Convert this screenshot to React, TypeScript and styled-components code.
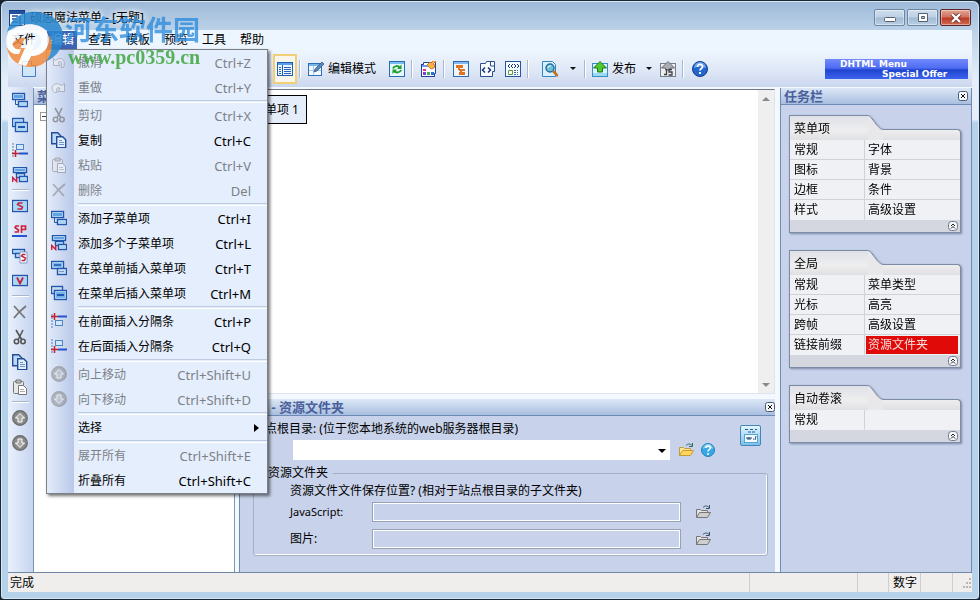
import React from "react";
import styled, { createGlobalStyle, css } from "styled-components";

const GlobalStyle = createGlobalStyle`
  *, *::before, *::after { box-sizing: border-box; }
  html, body { margin: 0; background: #16242e; }
  body, button, input, select, table {
    font-family: "Noto Sans", "Noto Sans CJK SC", sans-serif;
    font-size: 12px;
    line-height: 16px;
    color: #000;
  }
  button { border: 0; padding: 0; margin: 0; background: none; cursor: default; }
  a { color: inherit; text-decoration: none; }
`;

/* ---------- window frame ---------- */

const Window = styled.div`
  position: relative;
  min-height: 100vh;
  display: flex;
  flex-direction: column;
  padding: 0 7px 7px;
  border: 1px solid #1b2a38;
  border-radius: 7px 7px 4px 4px;
  background: linear-gradient(#9db9d8 0, #bcd2e9 30px, #e6eff9 80px, #e6eff9 118px, #b6d1ea 122px, #b6d1ea 100%);
  box-shadow: inset 0 0 0 1px #d5e6f5;
  overflow: hidden;
`;

const TitleBar = styled.header`
  display: flex;
  align-items: center;
  gap: 5px;
  height: 29px;
  padding: 4px 1px 0;
`;

const Title = styled.h1`
  flex: 1;
  margin: 0;
  font-size: 12px;
  font-weight: 400;
  text-shadow: 0 0 6px #fff, 0 0 6px #fff;
`;

const WindowButtons = styled.div`
  display: flex;
  gap: 2px;
`;

const WindowButton = styled.button<{ $close?: boolean }>`
  display: grid;
  place-items: center;
  width: 31px;
  height: 17px;
  border: 1px solid ${p => (p.$close ? "#5c2427" : "#6d87a3")};
  border-radius: 2px;
  background: ${p =>
    p.$close
      ? "linear-gradient(#e2a595, #d0705c 48%, #b93a22 52%, #d06a50)"
      : "linear-gradient(#cfdeee, #bdd0e4 48%, #a2bad2 52%, #b9cfe5)"};
  box-shadow: inset 0 0 0 1px rgba(255, 255, 255, 0.4);
`;

const Client = styled.div`
  flex: 1;
  display: flex;
  flex-direction: column;
  background: #eef5fd;
`;

/* ---------- menu bar ---------- */

const MenuBar = styled.nav`
  display: flex;
  gap: 8px;
  height: 20px;
  padding-left: 1px;
  background: #edf5fe;
`;

const MenuSlot = styled.div`
  position: relative;
`;

const MenuButton = styled.button<{ $open?: boolean }>`
  height: 18px;
  padding: 1px 3px;
  margin-top: 1px;
  white-space: nowrap;
  ${p => p.$open && css`background: #3d64b4; color: #fff;`}
`;

const Dropdown = styled.div`
  position: absolute;
  z-index: 5;
  top: 19px;
  left: -1px;
  width: 222px;
  border: 1px solid #7b8088;
  background: linear-gradient(90deg, #e4ecfb 0, #b9c8e8 27px, #e5eefc 27px, #e5eefc 100%);
  box-shadow: 2px 2px 3px rgba(0, 0, 0, 0.55);
`;

const MenuItem = styled.button`
  display: flex;
  align-items: center;
  width: 100%;
  height: 25px;
  padding-right: 16px;
  text-align: left;
  white-space: nowrap;
  &:disabled { color: #7c8188; }
  &:disabled svg { filter: grayscale(1); opacity: 0.5; }
`;

const MenuIcon = styled.span`
  width: 31px;
  height: 18px;
  padding-left: 4px;
`;

const MenuLabel = styled.span`
  flex: 1;
`;

const MenuKeys = styled.span`
  font-size: 13px;
`;

const MenuRule = styled.hr`
  height: 3px;
  margin: 0 0 0 31px;
  border: 0;
  border-top: 1px solid #bccbe0;
  border-bottom: 1px solid #fff;
`;

/* ---------- toolbar ---------- */

const ToolBar = styled.div`
  display: flex;
  align-items: center;
  gap: 2px;
  height: 37px;
  padding-left: 9px;
  background: linear-gradient(#eef5fe, #dfe8f7 55%, #cbd7ee);
`;

const FileTools = styled.div`
  width: 254px;
`;

const Tool = styled.button<{ $active?: boolean }>`
  display: grid;
  place-items: center;
  width: 24px;
  height: 30px;
  ${p => p.$active && css`border: 2px solid #f0cf77; background: #f7f5ec;`}
`;

const TextTool = styled.button<{ $split?: boolean }>`
  display: flex;
  align-items: center;
  gap: 4px;
  height: 30px;
  padding: 0 ${p => (p.$split ? 0 : 7)}px 0 ${p => (p.$split ? 2 : 3)}px;
  white-space: nowrap;
`;

const SearchTool = styled(TextTool)`
  gap: 6px;
  padding: 0 4px 0 9px;
`;

const ToolRule = styled.span`
  width: 4px;
  height: 18px;
  border-left: 1px solid #aab8cf;
  box-shadow: inset 1px 0 #fff;
`;

const Caret = styled.span`
  margin: 0 2px 0 6px;
  border: 3px solid transparent;
  border-top-color: #111;
  border-bottom: 0;
`;

const Banner = styled.a`
  display: flex;
  flex-direction: column;
  width: 143px;
  height: 20px;
  margin: 0 4px 0 auto;
  background: linear-gradient(#7389fb, #4e6df4 45%, #1f45ce 55%, #3c62f0);
  color: #fff;
  font: bold 9px/10px "DejaVu Sans", sans-serif;
  white-space: nowrap;
  span:first-child { padding-left: 15px; }
  span:last-child { padding-left: 57px; }
`;

/* ---------- work area ---------- */

const WorkArea = styled.div`
  flex: 1;
  display: flex;
  background: #f3f9fe;
  border-bottom: 1px solid #7088a4;
`;

const SideBar = styled.div`
  display: flex;
  flex-direction: column;
  width: 25px;
  background: linear-gradient(90deg, #e9f1fd, #c6d4ee);
`;

const SideTool = styled.button`
  display: grid;
  place-items: center;
  width: 23px;
  height: 25px;
`;

const SideRule = styled.hr`
  width: 17px;
  height: 2px;
  margin: 2px 4px;
  border: 0;
  border-top: 1px solid #a9b6cc;
  background: #fff;
`;

const Pane = styled.section`
  display: flex;
  flex-direction: column;
  min-width: 0;
`;

const TreePane = styled(Pane)`
  width: 202px;
  margin: 1px 4px 0 0;
  border: 1px solid #7b95b5;
  border-width: 0 1px 0 1px;
  background: #fff;
`;

const PaneHeader = styled.header`
  display: flex;
  align-items: center;
  justify-content: space-between;
  height: 17px;
  padding: 0 3px;
  border-bottom: 1px solid #6d8bb5;
  background: linear-gradient(#dce7f6, #a9bfe0);
  color: #4a5f9b;
  overflow: hidden;
`;

const DockHeader = styled(PaneHeader)`
  padding: 0 0 0 2px;
`;

const PaneTitle = styled.h2`
  margin: 0;
  font-size: 13px;
  line-height: 16px;
  font-weight: 700;
  white-space: nowrap;
`;

const TreeBody = styled.div`
  padding: 7px 6px;
`;

const Expander = styled.button`
  display: grid;
  place-items: center;
  width: 9px;
  height: 9px;
  border: 1px solid #9a9a9a;
  &::after { content: ""; width: 5px; height: 1px; background: #444; }
`;

const Center = styled.div`
  flex: 1;
  display: flex;
  flex-direction: column;
  gap: 5px;
  min-width: 0;
  margin: 2px 5px 0 0;
`;

const Preview = styled.div`
  flex: 1;
  display: flex;
  justify-content: space-between;
  border: 1px solid #717784;
  border-bottom-color: #dce4ee;
  border-right-color: #dce4ee;
  background: #fff;
`;

const PreviewItem = styled.button`
  height: 29px;
  margin: 5px;
  padding: 0 7px;
  border: 1px solid #000;
  background: #e6edfa;
`;

const ScrollTrack = styled.div`
  display: flex;
  flex-direction: column;
  justify-content: space-between;
  width: 16px;
  background: #f0efef;
`;

const ScrollButton = styled.button<{ $up?: boolean }>`
  display: grid;
  place-items: center;
  height: 17px;
  &::after {
    content: "";
    border: 4px solid transparent;
    ${p =>
      p.$up
        ? css`border-bottom-color: #8a8a8a; border-top: 0;`
        : css`border-top-color: #8a8a8a; border-bottom: 0;`}
  }
`;

const Dock = styled(Pane)`
  height: 173px;
  border-left: 1px solid #6d8bb5;
  background: #c8d3eb;
`;

const DockBody = styled.form`
  display: flex;
  flex-direction: column;
  padding: 3px 7px 0 13px;
`;

const RootRow = styled.div`
  display: flex;
  align-items: flex-start;
`;

const RootField = styled.div`
  flex: 1;
  min-width: 0;
`;

const RootLabel = styled.label`
  display: block;
  height: 21px;
  line-height: 20px;
  white-space: nowrap;
`;

const PathRow = styled.div`
  display: flex;
  align-items: center;
  gap: 4px;
  padding-left: 40px;
`;

const PathSelect = styled.select`
  flex: 1;
  height: 20px;
  border: 0;
  border-radius: 0;
  appearance: none;
  background: #fff;
`;

const SelectWrap = styled.div`
  position: relative;
  flex: 1;
  display: flex;
  margin-right: 3px;
  &::after {
    content: "";
    position: absolute;
    right: 4px;
    top: 9px;
    border: 4px solid transparent;
    border-top-color: #000;
    border-bottom: 0;
    pointer-events: none;
  }
`;

const PlainButton = styled.button`
  display: grid;
  place-items: center;
  width: 18px;
  height: 18px;
`;

const PreviewButton = styled.button`
  display: grid;
  place-items: center;
  width: 21px;
  height: 21px;
  margin: 6px 7px 0 23px;
  border: 1px solid #4486b5;
  border-radius: 2px;
  background: linear-gradient(#e4f6ff, #7cc1ed);
`;

const Group = styled.fieldset`
  min-width: 0;
  height: 91px;
  margin: 5px 0 0;
  padding: 2px 0 0 36px;
  border: 1px solid #a2afc8;
  border-radius: 3px;
  box-shadow: inset -1px -1px #fff;
`;

const Legend = styled.legend`
  margin-left: -24px;
  padding-right: 5px;
  line-height: 16px;
`;

const Hint = styled.p`
  margin: 0 0 3px;
  line-height: 16px;
  white-space: nowrap;
`;

const FieldRow = styled.div`
  display: flex;
  align-items: center;
  height: 20px;
  margin-bottom: 7px;
`;

const FieldLabel = styled.label`
  width: 82px;
  white-space: nowrap;
`;

const LatinLabel = styled(FieldLabel)`
  font-size: 11px;
`;

const PathInput = styled.input`
  flex: 1;
  min-width: 0;
  height: 20px;
  margin-right: 13px;
  border: 1px solid #95a2b9;
  border-radius: 0;
  background: #c8d3eb;
  box-shadow: inset 1px 1px #fff, inset -1px -1px #fff;
`;

const BrowseButton = styled(PlainButton)`
  margin-right: 55px;
`;

/* ---------- task pane ---------- */

const TaskPane = styled(Pane)`
  width: 192px;
  margin-top: 1px;
  border: 1px solid #6d8bb5;
  border-width: 0 1px 0 1px;
  background: #c8d3eb;
`;

const TaskBody = styled.div`
  display: flex;
  flex-direction: column;
  gap: 17px;
  padding: 10px 10px 0 8px;
`;

const Card = styled.section`
  filter: drop-shadow(1px 1px 1px rgba(70, 85, 115, 0.6));
`;

const CardHeader = styled.header`
  display: flex;
  align-items: flex-end;
  height: 25px;
`;

const CardTab = styled.h3`
  height: 25px;
  width: 79px;
  margin: 0;
  padding: 4px 4px 0;
  border: 1px solid #7c8ba6;
  border-width: 1px 0 0 1px;
  background: linear-gradient(#dfe1e7, #eeeeef 60%, #e0e0e3);
  font-size: 12px;
  line-height: 18px;
  font-weight: 400;
`;

const CardShoulder = styled.span`
  flex: 1;
  height: 11px;
  border: 1px solid #7c8ba6;
  border-width: 1px 1px 0 0;
  border-radius: 0 4px 0 0;
  background: linear-gradient(#eeeeef, #e0e0e3);
`;

const CardTable = styled.table`
  width: 100%;
  border: 1px solid #7c8ba6;
  border-width: 0 1px;
  border-spacing: 0;
  table-layout: fixed;
  background: #f0f1f5;
  td {
    height: 20px;
    padding: 1px 2px 0 4px;
    line-height: 18px;
    border-bottom: 1px solid #d0d2d7;
    white-space: nowrap;
  }
  td:first-child { width: 75px; border-right: 1px solid #d0d2d7; }
  td:last-child { padding-left: 1px; }
  tr:last-child td { border-bottom-color: transparent; }
`;

const CardLink = styled.a<{ $selected?: boolean }>`
  display: block;
  padding-left: 2px;
  ${p => p.$selected && css`background: #e00a08; color: #f7dcdc;`}
`;

const CardFooter = styled.footer`
  display: flex;
  justify-content: flex-end;
  align-items: center;
  height: 13px;
  padding-right: 2px;
  border: 1px solid #7c8ba6;
  border-top: 0;
  background: #d5d7e0;
`;

const SmallButton = styled.button`
  display: grid;
  place-items: center;
  width: 10px;
  height: 10px;
`;

/* ---------- status bar ---------- */

const StatusBar = styled.footer`
  display: flex;
  height: 19px;
  background: #f0eeed;
`;

const StatusText = styled.span`
  flex: 1;
  padding: 1px 2px;
  line-height: 18px;
`;

const StatusCell = styled.span<{ $width: number }>`
  width: ${p => p.$width}px;
  padding: 1px 4px;
  border-left: 1px solid #d0cecd;
  line-height: 18px;
  white-space: nowrap;
`;

/* ---------- overlay mark ---------- */

const Mark = styled.div`
  position: absolute;
  z-index: 9;
  top: 7px;
  left: 2px;
  display: flex;
  pointer-events: none;
`;

const MarkText = styled.div`
  display: flex;
  flex-direction: column;
  white-space: nowrap;
`;

const MarkName = styled.span`
  height: 37px;
  color: #2589dc;
  opacity: 0.75;
  font: bold 27px/42px "Noto Sans CJK SC", sans-serif;
`;

const MarkSite = styled.span`
  padding-left: 3px;
  color: #41a640;
  opacity: 0.85;
  font: bold 20px/24px "Liberation Serif", serif;
`;

/* ---------- icons ---------- */

const box = (x: number, y: number, w: number, h: number, fill = "#a9d7f5") => (
  <g>
    <rect x={x + 0.5} y={y + 0.5} width={w} height={h} fill="#d3e9fb" stroke="#2056ad" strokeWidth="1.4" />
    <rect x={x + 2} y={y + 2} width={w - 3} height={h - 3} fill={fill} />
  </g>
);

const ART: Record<string, React.ReactNode> = {
  app: (
    <>
      <rect x=".5" y=".5" width="15" height="15" fill="#fff" stroke="#173e80" />
      <path d="M1 1h14v3H1z" fill="#214fa1" />
      <path d="M3 6h6M3 9h5M11 6v8M3 12h6" stroke="#214fa1" strokeWidth="1.5" />
    </>
  ),
  fresh: (
    <>
      <path d="M1.5 .5h9l4 4v11h-13z" fill="#cfe6fb" stroke="#3f7cc2" />
      <path d="M10.500 .500v4h4" fill="#fff" stroke="#3f7cc2" />
    </>
  ),
  panel: (
    <>
      <rect x=".5" y="1.500" width="15" height="13" fill="#edf6ff" stroke="#1f5dad" />
      <path d="M1 2h14v2H1z" fill="#5aa0e6" />
      <path d="M5.500 4v10" stroke="#1f5dad" />
      <path d="M2 6.500h2m-2 2h2m-2 2h2m-2 2h2M7 6.500h7m-7 2h7m-7 2h7m-7 2h7" stroke="#2a64bd" />
    </>
  ),
  edit: (
    <>
      <rect x=".5" y="2.500" width="13" height="12" fill="#f2f9ff" stroke="#2870b8" />
      <path d="M1 3h12v2H1z" fill="#76b6e8" />
      <path d="M1 9.500h12M5.500 5v9" stroke="#a9cae8" />
      <path d="M6 11l1-3 7-7 2 2-7 7z" fill="#5b89bb" stroke="#28527f" strokeWidth=".7" />
    </>
  ),
  refresh: (
    <>
      <rect x=".5" y=".5" width="15" height="15" fill="#e9f8ff" stroke="#2a6bb5" />
      <path d="M1 1h14v2H1z" fill="#78bdf0" />
      <path d="M4 7.500c1-3 5-3 7-1M12 9c-1 3-5 3-7 1" fill="none" stroke="#18a12b" strokeWidth="2" />
      <path d="M12.500 3.500v4.500h-4.500zM3.500 13V8.500H8z" fill="#18a12b" />
    </>
  ),
  palette: (
    <>
      <rect x=".5" y="3.500" width="13" height="12" fill="#fff" stroke="#273e9c" />
      <path d="M2.500 3.500v-2h12v11h-1" fill="#fff" stroke="#273e9c" />
      <path d="M1 4h12v2H1z" fill="#6d9be6" />
      <path d="M2 8h3v2H2z" fill="#e6308a" />
      <path d="M2 11h3v3H2z" fill="#7b43cf" />
      <path d="M6 11h3v3H6z" fill="#41b24b" />
      <path d="M10 11h3v3h-3z" fill="#2a72d8" />
      <path d="M6 4l4 4 3-1 1-3-2-1 3-3-2-1-3 3-1-1z" fill="#ffb13d" stroke="#c06a1a" strokeWidth=".8" />
    </>
  ),
  structure: (
    <>
      <rect x=".5" y=".5" width="15" height="15" fill="#eef7ff" stroke="#2a6bb5" />
      <path d="M1 1h14v2H1z" fill="#85baf0" />
      <path d="M3 4h7v3H3zM6 8h6v2H6zM6 11h6v3H6z" fill="#e07324" />
      <path d="M6 6v3M8 9v4" stroke="#e07324" strokeWidth="2" />
    </>
  ),
  code: (
    <>
      <path d="M1.500 2.500h5l1-2h8v10h-2v5h-12z" fill="#f8fcff" stroke="#2a4f91" />
      <path d="M11.500 1v4h4" fill="none" stroke="#2a4f91" />
      <path d="M6 6.500L3.500 9 6 11.500M9 6.500L11.500 9 9 11.500" fill="none" stroke="#173373" strokeWidth="1.500" />
    </>
  ),
  template: (
    <>
      <rect x=".5" y=".5" width="15" height="15" fill="#f6fbff" stroke="#25559f" />
      <path d="M5 3L3 5l2 2M8 3L6 5l2 2M9 3l2 2-2 2M12 3l2 2-2 2" fill="none" stroke="#173373" />
      <path d="M3.500 9.500h4v4h-4z" fill="#fff" stroke="#5b9b3e" />
      <path d="M9 9.500h4M9 11.500h4M9 13.500h4" stroke="#47688c" strokeDasharray="2 1" />
    </>
  ),
  find: (
    <>
      <path d="M.5.500h10l3 3v12H.500z" fill="#d9f1ff" stroke="#3586bf" />
      <circle cx="8" cy="7" r="4" fill="#70bfdc" stroke="#276f9b" strokeWidth="1.500" />
      <path d="M6 7c0-2 1-2 3-2" fill="none" stroke="#fff" />
      <path d="M11 10l5 5" stroke="#c27225" strokeWidth="2.500" />
    </>
  ),
  publish: (
    <>
      <rect x=".5" y="2.500" width="15" height="13" fill="#dff4ff" stroke="#3a8dc4" />
      <path d="M1 12h14v3H1z" fill="#9fdaf4" />
      <path d="M8 .500L14.500 7H10.500v4h-5V7h-4z" fill="#53c92e" stroke="#167d1b" />
    </>
  ),
  publishJs: (
    <>
      <rect x=".5" y="2.500" width="15" height="13" fill="#eceef1" stroke="#777e88" />
      <path d="M8 .500L14.500 7H10.500v2h-5V7h-4z" fill="#a9aeb4" stroke="#666c73" />
      <path d="M6.500 8v5.500H4M12 8.500H9v2.500h3v3H8.500" fill="none" stroke="#3b4045" strokeWidth="1.300" />
    </>
  ),
  help: (
    <>
      <circle cx="8" cy="8" r="7.500" fill="#2365cd" stroke="#123d87" />
      <path d="M2 7a6 6 0 0 1 12 0c-4-2-8-2-12 0z" fill="#6aa5ef" />
      <path d="M5.500 6c0-4 5.500-3 5 0-.3 1.500-2.500 1.500-2.500 3.500M8 11v2" fill="none" stroke="#fff" strokeWidth="1.800" />
    </>
  ),
  helpLight: (
    <>
      <circle cx="8" cy="8" r="6.500" fill="#36a6e5" stroke="#2283bd" />
      <path d="M3 7a5 5 0 0 1 10 0c-4-2-6-2-10 0z" fill="#85cff5" />
      <path d="M6 6c0-3 4.500-2.500 4.500 0C10.300 7.500 8 7.500 8 9.500M8 11v2" fill="none" stroke="#fff" strokeWidth="1.500" />
    </>
  ),
  child: <>{box(0, 1, 12, 6, "#5fa4e3")}<path d="M3.500 8v4.500h3" fill="none" stroke="#2056ad" />{box(6, 9, 9, 5)}</>,
  overlap: <>{box(0, 1, 11, 8)}{box(3, 5, 12, 9)}<path d="M6 10h7" stroke="#2056ad" strokeWidth="2" /></>,
  before: <>{box(0, 1, 12, 7, "#7dbbed")}<path d="M3 5h7" stroke="#2056ad" strokeWidth="1.500" />{box(6, 8, 9, 6, "#c7d9eb")}<path d="M8 11.500h5" stroke="#7d9bc7" /></>,
  after: <>{box(0, 1, 11, 7, "#c7d9eb")}{box(3, 5, 12, 9, "#71b5eb")}<path d="M6 10h7" stroke="#2056ad" strokeWidth="2" /></>,
  many: (
    <>
      {box(1, 0, 13, 5, "#5fa4e3")}{box(4, 6, 8, 4)}{box(7, 9, 8, 5)}
      <path d="M.7 15v-4.500l4 4v-4.500" fill="none" stroke="#c71f3f" strokeWidth="1.400" />
    </>
  ),
  ruleBefore: (
    <>
      <path d="M1 1v14" stroke="#5d7eac" strokeDasharray="2 1" />
      <path d="M0 3.500h7M3.500 0v7" stroke="#c51f2d" strokeWidth="1.500" />
      <path d="M7 3.500h9" stroke="#2454c9" strokeWidth="2" />
      <rect x="4.500" y="7.500" width="7" height="5" fill="#d4e5f4" stroke="#4a86c8" />
    </>
  ),
  ruleAfter: (
    <>
      <path d="M1 1v14" stroke="#5d7eac" strokeDasharray="2 1" />
      <rect x="4.500" y="2.500" width="7" height="5" fill="#d4e5f4" stroke="#4a86c8" />
      <path d="M0 11.500h7M3.500 8v7" stroke="#c51f2d" strokeWidth="1.500" />
      <path d="M7 11.500h9" stroke="#2454c9" strokeWidth="2" />
    </>
  ),
  style: (
    <>
      {box(0, 2, 15, 11)}
      <path d="M10.500 5H6.500l-1 1.500 5 2.500-1 2H5.500" fill="none" stroke="#c3223f" strokeWidth="1.600" />
    </>
  ),
  sp: (
    <>
      <path d="M7 3H4L3 4.500 6.500 7 6 9H2.500M9.500 10V3h4v3.500h-4" fill="none" stroke="#d0223f" strokeWidth="1.700" />
      <path d="M0 13h15" stroke="#2655d1" strokeWidth="2" />
    </>
  ),
  childStyle: (
    <>
      {box(0, 1, 12, 4)}{box(3, 5, 6, 4)}
      <path d="M8 4h7v11H8z" fill="#fff" stroke="#7d9bc7" />
      <path d="M13.500 6.500h-3l-1 1.500 4 2-1 2.500H9.500" fill="none" stroke="#c3223f" strokeWidth="1.500" />
    </>
  ),
  variable: <>{box(0, 2, 15, 10)}<path d="M5 4.500l3 6 3-6" fill="none" stroke="#c3223f" strokeWidth="1.800" /></>,
  remove: <path d="M2 2l11 12M14 2C9 6 5 10 2 14" fill="none" stroke="#777" strokeWidth="1.800" />,
  cut: (
    <>
      <path d="M4 1l6 10M11 1L6 11" stroke="#555" strokeWidth="1.600" />
      <circle cx="4.500" cy="12.500" r="2.200" fill="none" stroke="#555" strokeWidth="1.600" />
      <circle cx="11" cy="12.500" r="2.200" fill="none" stroke="#555" strokeWidth="1.600" />
    </>
  ),
  copy: (
    <>
      <path d="M.7.700h6l3 3v8h-9z" fill="#bcd8f5" stroke="#234c96" strokeWidth="1.400" />
      <path d="M5.700 4.700h6l3 3v8h-9z" fill="#e2f0fd" stroke="#234c96" strokeWidth="1.400" />
      <path d="M8 8.500h3m-3 2h5m-5 2h5" stroke="#6d94ca" />
    </>
  ),
  paste: (
    <>
      <rect x="1.500" y="2.500" width="10" height="12" rx="1" fill="#e8e8e8" stroke="#777" />
      <path d="M4 1h5v3H4z" fill="#bbb" stroke="#777" />
      <path d="M6.500 6.500h5l3 3v6h-8z" fill="#fff" stroke="#777" />
      <path d="M8 10.500h4m-4 2h5" stroke="#aaa" />
    </>
  ),
  up: (
    <>
      <circle cx="8" cy="8" r="7.200" fill="#8a8a8a" stroke="#6f6f6f" strokeWidth="1.500" />
      <path d="M8 3.500l4.500 4.500h-2.500v4h-4V8H3.500z" fill="#a9a9a9" stroke="#fff" />
    </>
  ),
  down: (
    <>
      <circle cx="8" cy="8" r="7.200" fill="#8a8a8a" stroke="#6f6f6f" strokeWidth="1.500" />
      <path d="M8 12.500L12.500 8h-2.500V4h-4v4H3.500z" fill="#a9a9a9" stroke="#fff" />
    </>
  ),
  undo: <path d="M3.500 13.500c-3-7 2-12 8-7l2-2v7H7l2-3c-3-2-5 0-3 5z" transform="matrix(-1 0 0 1 16 0)" fill="#f3f3f3" stroke="#888" />,
  redo: <path d="M3.500 13.500c-6-5 0-12 7-7l3-2v8H7l2-3c-3-2-4 0-3 4z" fill="#f3f3f3" stroke="#888" />,
  folder: (
    <>
      <path d="M1.500 13.500v-8h4l1 1h6v2" fill="#ffe694" stroke="#c59a3a" />
      <path d="M1.500 13.500l3-5h11l-3 5z" fill="#ffd65a" stroke="#c59a3a" />
      <path d="M8 3.500c2-2 4-2 6 0M14.500 1v3.500H11" fill="none" stroke="#2b6a5a" />
    </>
  ),
  folderGrey: (
    <>
      <path d="M1.500 13.500v-8h4l1 1h6v2" fill="#e3e3e3" stroke="#777" />
      <path d="M1.500 13.500l3-5h11l-3 5z" fill="#cfcfcf" stroke="#777" />
      <path d="M8 3.500c2-2 4-2 6 0M14.500 1v3.500H11" fill="none" stroke="#39505e" />
    </>
  ),
  form: (
    <>
      <path d="M2 1.500h3m2 0h3m2 0h2M5 4h8" stroke="#235c90" strokeDasharray="3 1" />
      <rect x="1.500" y="6.500" width="13" height="8" fill="#f3fbff" stroke="#54a4d6" />
      <path d="M4 9v2h2V9v2h2V9M10 11h1M13 8l-1 4" fill="none" stroke="#284d78" />
    </>
  ),
};

const Icon = ({ name }: { name: string }) => (
  <svg width="16" height="16" viewBox="0 0 16 16" aria-hidden="true">
    {ART[name]}
  </svg>
);

const CloseGlyph = () => (
  <svg width="10" height="10" viewBox="0 0 10 10" aria-hidden="true">
    <rect x=".5" y=".5" width="9" height="9" rx="2" fill="#f4f8fc" stroke="#4d5b70" />
    <path d="M3 3l4 4M7 3L3 7" stroke="#111" />
  </svg>
);

const CollapseGlyph = () => (
  <svg width="10" height="10" viewBox="0 0 10 10" aria-hidden="true">
    <rect x=".5" y=".5" width="9" height="9" rx="3" fill="#f4f5f8" stroke="#6f7a8c" />
    <path d="M3 5l2-2 2 2M3 7.500l2-2 2 2" fill="none" stroke="#222" />
  </svg>
);

/* ---------- data ---------- */

type Entry = { label: string; keys?: string; icon?: string; off?: boolean; sub?: boolean };

const EDIT_MENU: Entry[][] = [
  [
    { label: "撤消", keys: "Ctrl+Z", icon: "undo", off: true },
    { label: "重做", keys: "Ctrl+Y", icon: "redo", off: true },
  ],
  [
    { label: "剪切", keys: "Ctrl+X", icon: "cut", off: true },
    { label: "复制", keys: "Ctrl+C", icon: "copy" },
    { label: "粘贴", keys: "Ctrl+V", icon: "paste", off: true },
    { label: "删除", keys: "Del", icon: "remove", off: true },
  ],
  [
    { label: "添加子菜单项", keys: "Ctrl+I", icon: "child" },
    { label: "添加多个子菜单项", keys: "Ctrl+L", icon: "many" },
    { label: "在菜单前插入菜单项", keys: "Ctrl+T", icon: "before" },
    { label: "在菜单后插入菜单项", keys: "Ctrl+M", icon: "after" },
  ],
  [
    { label: "在前面插入分隔条", keys: "Ctrl+P", icon: "ruleBefore" },
    { label: "在后面插入分隔条", keys: "Ctrl+Q", icon: "ruleAfter" },
  ],
  [
    { label: "向上移动", keys: "Ctrl+Shift+U", icon: "up", off: true },
    { label: "向下移动", keys: "Ctrl+Shift+D", icon: "down", off: true },
  ],
  [{ label: "选择", sub: true }],
  [
    { label: "展开所有", keys: "Ctrl+Shift+E", off: true },
    { label: "折叠所有", keys: "Ctrl+Shift+C" },
  ],
];

const SIDE_TOOLS = [
  ["child", "overlap", "ruleAfter", "many"],
  ["style", "sp", "childStyle", "variable"],
  ["remove", "cut", "copy", "paste"],
  ["up", "down"],
];

const CARDS = [
  { title: "菜单项", rows: [["常规", "字体"], ["图标", "背景"], ["边框", "条件"], ["样式", "高级设置"]] },
  { title: "全局", rows: [["常规", "菜单类型"], ["光标", "高亮"], ["跨帧", "高级设置"], ["链接前缀", "资源文件夹"]] },
  { title: "自动卷滚", rows: [["常规", ""]] },
];

const SELECTED = "资源文件夹";

/* ---------- parts ---------- */

const SubArrow = styled.span`
  margin-right: -8px;
  border: 4px solid transparent;
  border-left: 5px solid #000;
  border-right: 0;
`;

const EditMenu = () => (
  <Dropdown role="menu">
    {EDIT_MENU.map((group, i) => (
      <React.Fragment key={i}>
        {i > 0 && <MenuRule />}
        {group.map(item => (
          <MenuItem key={item.label} role="menuitem" disabled={item.off}>
            <MenuIcon>{item.icon && <Icon name={item.icon} />}</MenuIcon>
            <MenuLabel>{item.label}</MenuLabel>
            {item.keys && <MenuKeys>{item.keys}</MenuKeys>}
            {item.sub && <SubArrow />}
          </MenuItem>
        ))}
      </React.Fragment>
    ))}
  </Dropdown>
);

const TaskCard = ({ title, rows }: { title: string; rows: string[][] }) => (
  <Card>
    <CardHeader>
      <CardTab>{title}</CardTab>
      <svg width="15" height="25" viewBox="0 0 15 25" aria-hidden="true">
        <path d="M0 0c4 1 9 13 15 14v11H0z" fill="#e8e8eb" />
        <path d="M0 .500c4 .500 9 13.500 15 14" fill="none" stroke="#7c8ba6" />
      </svg>
      <CardShoulder />
    </CardHeader>
    <CardTable>
      <tbody>
        {rows.map(([left, right]) => (
          <tr key={left}>
            <td><a href="#">{left}</a></td>
            <td>{right && <CardLink href="#" $selected={right === SELECTED}>{right}</CardLink>}</td>
          </tr>
        ))}
      </tbody>
    </CardTable>
    <CardFooter>
      <SmallButton aria-label="折叠"><CollapseGlyph /></SmallButton>
    </CardFooter>
  </Card>
);

const Watermark = () => (
  <Mark>
    <svg width="62" height="62" viewBox="0 0 62 62" aria-hidden="true">
      <g opacity=".85">
        <path d="M4 24C8 8 22 2 36 4c16 2 25 14 24 27-1 11-8 19-18 23 8-12 9-24 2-31C34 13 16 14 4 24z" fill="#2887cf" />
        <path d="M4 40c2 12 12 19 24 19 4 0 9-1 13-4 8-7 10-19 5-28-1 12-8 19-18 21l-4 8-7-1 6-15z" fill="#f28b3e" />
        <path d="M4 27C14 15 34 13 43 23c7 9 1 25-15 25l-5 10-8-2 11-25 8-1-5 12c9 0 12-10 7-15-8-7-20-2-27 7 1 6 4 8 9 7l-2 5C6 47 1 38 4 27z" fill="#fff" />
        <path d="M10 35c3-4 7-6 12-5l-5 11c-5 0-8-2-7-6z" fill="#f08b40" />
      </g>
    </svg>
    <MarkText>
      <MarkName>河东软件园</MarkName>
      <MarkSite>www.pc0359.cn</MarkSite>
    </MarkText>
  </Mark>
);

export default function App() {
  return (
    <>
      <GlobalStyle />
      <Window>
        <TitleBar>
          <Icon name="app" />
          <Title>硕思魔法菜单 - [无题]</Title>
          <WindowButtons>
            <WindowButton aria-label="最小化">
              <svg width="12" height="10"><rect x=".5" y="4.500" width="11" height="4" rx="1" fill="#fff" stroke="#55606c" /></svg>
            </WindowButton>
            <WindowButton aria-label="最大化">
              <svg width="10" height="9"><path d="M.5.500h9v8h-9zM3.500 3.500h3v2h-3z" fill="#fff" stroke="#55606c" fillRule="evenodd" /></svg>
            </WindowButton>
            <WindowButton $close aria-label="关闭">
              <svg width="12" height="10"><path d="M2 1l8 8M10 1L2 9" stroke="#6b3434" strokeWidth="4" /><path d="M2 1l8 8M10 1L2 9" stroke="#fff" strokeWidth="2.400" /></svg>
            </WindowButton>
          </WindowButtons>
        </TitleBar>

        <Client>
          <MenuBar>
            {["文件", "编辑", "查看", "模板", "预览", "工具", "帮助"].map(name => (
              <MenuSlot key={name}>
                <MenuButton $open={name === "编辑"}>{name}</MenuButton>
                {name === "编辑" && <EditMenu />}
              </MenuSlot>
            ))}
          </MenuBar>

          <ToolBar>
            <FileTools><Tool aria-label="新建"><Icon name="fresh" /></Tool></FileTools>
            <Tool $active aria-label="面板"><Icon name="panel" /></Tool>
            <ToolRule />
            <TextTool><Icon name="edit" />编辑模式</TextTool>
            <Tool aria-label="刷新"><Icon name="refresh" /></Tool>
            <ToolRule />
            <Tool aria-label="样式"><Icon name="palette" /></Tool>
            <ToolRule />
            <Tool aria-label="结构"><Icon name="structure" /></Tool>
            <Tool aria-label="代码"><Icon name="code" /></Tool>
            <Tool aria-label="模板"><Icon name="template" /></Tool>
            <ToolRule />
            <SearchTool aria-label="预览"><Icon name="find" /><Caret /></SearchTool>
            <ToolRule />
            <TextTool $split><Icon name="publish" />发布<Caret /></TextTool>
            <Tool aria-label="发布脚本"><Icon name="publishJs" /></Tool>
            <ToolRule />
            <Tool aria-label="帮助"><Icon name="help" /></Tool>
            <Banner href="#"><span>DHTML Menu</span><span>Special Offer</span></Banner>
          </ToolBar>

          <WorkArea>
            <SideBar>
              {SIDE_TOOLS.map((group, i) => (
                <React.Fragment key={i}>
                  {i > 0 && <SideRule />}
                  {group.map(name => (
                    <SideTool key={name} aria-label={name}><Icon name={name} /></SideTool>
                  ))}
                </React.Fragment>
              ))}
            </SideBar>

            <TreePane>
              <PaneHeader><PaneTitle>菜单</PaneTitle></PaneHeader>
              <TreeBody><Expander aria-label="收起" /></TreeBody>
            </TreePane>

            <Center>
              <Preview>
                <PreviewItem>菜单项 1</PreviewItem>
                <ScrollTrack>
                  <ScrollButton $up aria-label="向上滚动" />
                  <ScrollButton aria-label="向下滚动" />
                </ScrollTrack>
              </Preview>

              <Dock>
                <DockHeader>
                  <PaneTitle>站点 - 资源文件夹</PaneTitle>
                  <SmallButton aria-label="关闭"><CloseGlyph /></SmallButton>
                </DockHeader>
                <DockBody>
                  <RootRow>
                    <RootField>
                      <RootLabel htmlFor="root">站点根目录: (位于您本地系统的web服务器根目录)</RootLabel>
                      <PathRow>
                        <SelectWrap><PathSelect id="root" /></SelectWrap>
                        <PlainButton type="button" aria-label="浏览"><Icon name="folder" /></PlainButton>
                        <PlainButton type="button" aria-label="帮助"><Icon name="helpLight" /></PlainButton>
                      </PathRow>
                    </RootField>
                    <PreviewButton type="button" aria-label="设置"><Icon name="form" /></PreviewButton>
                  </RootRow>
                  <Group>
                    <Legend>资源文件夹</Legend>
                    <Hint>资源文件文件保存位置? (相对于站点根目录的子文件夹)</Hint>
                    <FieldRow>
                      <LatinLabel htmlFor="js">JavaScript:</LatinLabel>
                      <PathInput id="js" />
                      <BrowseButton type="button" aria-label="浏览脚本"><Icon name="folderGrey" /></BrowseButton>
                    </FieldRow>
                    <FieldRow>
                      <FieldLabel htmlFor="img">图片:</FieldLabel>
                      <PathInput id="img" />
                      <BrowseButton type="button" aria-label="浏览图片"><Icon name="folderGrey" /></BrowseButton>
                    </FieldRow>
                  </Group>
                </DockBody>
              </Dock>
            </Center>

            <TaskPane>
              <PaneHeader>
                <PaneTitle>任务栏</PaneTitle>
                <SmallButton aria-label="关闭"><CloseGlyph /></SmallButton>
              </PaneHeader>
              <TaskBody>
                {CARDS.map(card => <TaskCard key={card.title} {...card} />)}
              </TaskBody>
            </TaskPane>
          </WorkArea>

          <StatusBar>
            <StatusText>完成</StatusText>
            <StatusCell $width={108} />
            <StatusCell $width={31} />
            <StatusCell $width={32}>数字</StatusCell>
            <StatusCell $width={32} />
            <StatusCell $width={20}>
              <svg width="15" height="15" viewBox="0 0 15 15" aria-hidden="true">
                <path d="M12 4h2v2h-2zM9 8h2v2H9zM12 8h2v2h-2zM6 12h2v2H6zM9 12h2v2H9zM12 12h2v2h-2z" fill="#b9b6b4" />
              </svg>
            </StatusCell>
          </StatusBar>
        </Client>
        <Watermark />
      </Window>
    </>
  );
}
